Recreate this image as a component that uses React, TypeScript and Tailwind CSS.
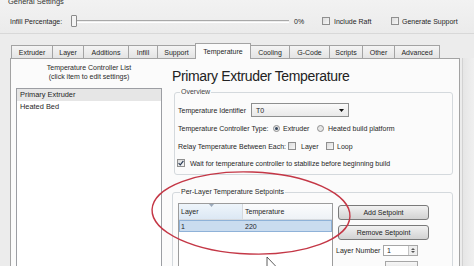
import type { ReactNode } from 'react'

const tabs = [
  { label: 'Extruder', w: 'w-[42px]' },
  { label: 'Layer', w: 'w-[32px]' },
  { label: 'Additions', w: 'w-[46px]' },
  { label: 'Infill', w: 'w-[30px]' },
  { label: 'Support', w: 'w-[39px]' },
  { label: 'Temperature', w: 'w-[56px]', active: true },
  { label: 'Cooling', w: 'w-[40px]' },
  { label: 'G-Code', w: 'w-[41px]' },
  { label: 'Scripts', w: 'w-[34px]' },
  { label: 'Other', w: 'w-[33px]' },
  { label: 'Advanced', w: 'w-[46px]' },
]

function Check({ checked = false }: { checked?: boolean }) {
  return (
    <span className="flex h-[8px] w-[8px] shrink-0 items-center justify-center border border-[#8f8f8f] bg-linear-to-br from-[#dcdcdc] to-[#f7f7f7]">
      {checked && (
        <svg width="6" height="6" viewBox="0 0 6 6">
          <path d="M0.6 3.1 L2.3 4.8 L5.4 0.9" fill="none" stroke="#2a3c56" strokeWidth="1.2" />
        </svg>
      )}
    </span>
  )
}

function Radio({ on = false }: { on?: boolean }) {
  return (
    <span className="flex h-[7px] w-[7px] shrink-0 items-center justify-center rounded-full border border-[#8f8f8f] bg-[#e6e6e6]">
      {on && <span className="h-[3px] w-[3px] rounded-full bg-[#34465e]" />}
    </span>
  )
}

function Button({ children }: { children: ReactNode }) {
  return (
    <div className="flex h-[15px] w-[91px] items-center justify-center rounded-[3px] border border-[#7a7a7a] bg-linear-to-b from-[#f2f2f2] to-[#d2d2d2] text-[#222]">
      {children}
    </div>
  )
}

export default function App() {
  return (
    <div className="relative h-[266px] w-[474px] overflow-hidden bg-[#ececec] font-['Liberation_Sans',Arial,sans-serif] text-[7px] leading-none text-[#1f1f1f]">
      {/* general settings */}
      <div className="flex h-[34px] flex-col border-b border-[#d8d8d8] bg-linear-to-b from-[#f2f2f2] to-[#ebebeb]">
        <div className="-mt-[2px] pl-[8px] leading-[8px] text-[7.5px] text-[#333]">General Settings</div>
        <div className="mt-[7px] flex h-[16px] items-center pl-[10px]">
          <span className="w-[61px]">Infill Percentage:</span>
          <span className="h-[12px] w-[6px] rounded-[1px] border border-[#8b8b8b] bg-[#f4f4f4]" />
          <span className="h-[3px] w-[212px] border-t border-b border-t-[#a8a8a8] border-b-white" />
          <span className="ml-[5px] w-[28px]">0%</span>
          <Check />
          <span className="ml-[4px] w-[57px]">Include Raft</span>
          <Check />
          <span className="ml-[3px]">Generate Support</span>
        </div>
      </div>

      {/* tabs */}
      <div className="flex h-[24px] items-end pl-[11px]">
        {tabs.map(t => (
          <div
            key={t.label}
            className={
              t.active
                ? `${t.w} relative z-10 -mr-px -mb-px flex h-[16px] items-start justify-center border border-b-0 border-[#a3a3a3] bg-[#fbfbfb] pt-[4px]`
                : `${t.w} -mr-px flex h-[13px] items-center justify-center border border-b-0 border-[#a3a3a3] bg-linear-to-b from-[#f4f4f4] to-[#e4e4e4]`
            }
          >
            {t.label}
          </div>
        ))}
      </div>

      {/* pane */}
      <div className="flex h-[220px]">
        <div className="ml-[10px] flex w-[450px] border border-[#a3a3a3] bg-[#fbfbfb]">
          {/* controller list */}
          <div className="w-[151px] pl-[5px]">
            <div className="pt-[4px] text-center leading-[9px] text-[#2a2a2a]">
              <div>Temperature Controller List</div>
              <div>(click item to edit settings)</div>
            </div>
            <div className="mt-[7px] h-[200px] w-[146px] border border-[#9c9ea3] bg-white text-[7.4px]">
              <div className="flex h-[12px] items-center bg-[#e6e6e6] pl-[3px]">Primary Extruder</div>
              <div className="flex h-[12px] items-center pl-[3px]">Heated Bed</div>
            </div>
          </div>

          {/* editor */}
          <div className="ml-[10px] w-[281px] pt-[9px]">
            <div className="text-[14px] leading-[16px] tracking-[-0.35px] text-[#222]">Primary Extruder Temperature</div>

            <fieldset className="mt-[4px] ml-[2px] w-[279px] rounded-[3px] border border-[#d4d9dd] pb-[4px] pl-[3px]">
              <legend className="ml-[2px] px-[1px] leading-[8px] text-[#444]">Overview</legend>
              <div className="mt-[7px] flex h-[14px] items-center">
                <span className="w-[73px]">Temperature Identifier</span>
                <div className="flex h-[14px] w-[98px] items-center justify-between border border-[#8e8f8f] bg-linear-to-b from-[#fafafa] to-[#e9e9e9] pr-[4px] pl-[4px]">
                  <span>T0</span>
                  <svg width="5" height="3" viewBox="0 0 5 3">
                    <path d="M0 0 H5 L2.5 3 Z" fill="#111" />
                  </svg>
                </div>
              </div>
              <div className="mt-[4px] flex h-[14px] items-center">
                <span className="w-[95px]">Temperature Controller Type:</span>
                <Radio on />
                <span className="ml-[3px] w-[34px]">Extruder</span>
                <Radio />
                <span className="ml-[4px]">Heated build platform</span>
              </div>
              <div className="mt-[4px] flex h-[14px] items-center">
                <span className="w-[110px]">Relay Temperature Between Each:</span>
                <Check />
                <span className="ml-[5px] w-[25px]">Layer</span>
                <Check />
                <span className="ml-[3px]">Loop</span>
              </div>
              <div className="mt-[3px] -ml-[1px] flex h-[14px] items-center">
                <Check checked />
                <span className="ml-[5px]">Wait for temperature controller to stabilize before beginning build</span>
              </div>
            </fieldset>

            <fieldset className="mt-[13px] w-[281px] rounded-[3px] border border-[#d4d9dd] pl-[5px]">
              <legend className="ml-[2px] px-[1px] leading-[8px] text-[#2a2a2a]">Per-Layer Temperature Setpoints</legend>
              <div className="flex h-[80px]">
                <div className="mt-[7px] h-[80px] w-[155px] border border-[#9c9c9c] bg-white">
                  <div className="flex h-[16px] border-b border-[#d5d9de]">
                    <div className="relative flex w-[64px] items-center border-r border-[#d5d9de] bg-linear-to-b from-[#eef5fb] to-[#dce8f4] pl-[2px]">
                      Layer
                      <svg className="absolute top-0 left-[30px]" width="5" height="3" viewBox="0 0 5 3">
                        <path d="M0 0 H5 L2.5 3 Z" fill="#9aa9ba" />
                      </svg>
                    </div>
                    <div className="flex flex-1 items-center bg-linear-to-b from-[#fbfcfd] to-[#eef2f6] pl-[2px]">Temperature</div>
                  </div>
                  <div className="flex h-[12px] items-center border border-[#8fb2d8] bg-[#cadcef]">
                    <span className="w-[63px] pl-[1px]">1</span>
                    <span className="pl-[2px]">220</span>
                  </div>
                </div>
                <div className="mt-[9px] ml-[5px] flex flex-col">
                  <Button>Add Setpoint</Button>
                  <div className="mt-[5px]">
                    <Button>Remove Setpoint</Button>
                  </div>
                  <div className="mt-[5px] -ml-[2px] flex h-[11px] items-center">
                    <span className="w-[47px]">Layer Number</span>
                    <div className="flex h-[11px] w-[35px] items-center justify-between border border-[#a6a6a6] bg-white pl-[3px]">
                      <span>1</span>
                      <div className="flex h-full w-[9px] flex-col items-center justify-center gap-[1px] border-l border-[#c4c4c4] bg-[#eeeeee]">
                        <svg width="4" height="2" viewBox="0 0 4 2"><path d="M0 2 L2 0 L4 2 Z" fill="#555" /></svg>
                        <svg width="4" height="2" viewBox="0 0 4 2"><path d="M0 0 H4 L2 2 Z" fill="#555" /></svg>
                      </div>
                    </div>
                  </div>
                  <div className="mt-[5px] ml-[47px] h-[12px] w-[33px] border border-[#a6a6a6] bg-linear-to-b from-[#f6f6f6] to-[#e0e0e0]" />
                </div>
              </div>
            </fieldset>
          </div>
        </div>
        <div className="ml-[2px] h-full flex-1 border-l border-[#d2d2d2] bg-linear-to-r from-[#e6e6e6] to-[#f0f0f0]" />
      </div>

      {/* annotation overlay */}
      <svg className="pointer-events-none absolute inset-0" width="474" height="266" viewBox="0 0 474 266">
        <ellipse cx="251" cy="213" rx="99" ry="41" transform="rotate(2 251 213)" fill="none" stroke="#c43746" strokeWidth="1.4" />
        <path d="M267 257 L267 272 L270.5 268.5 L273 274 L275 273 L272.5 267.5 L277 267.5 Z" fill="#fff" stroke="#333" strokeWidth="0.8" />
      </svg>
    </div>
  )
}
